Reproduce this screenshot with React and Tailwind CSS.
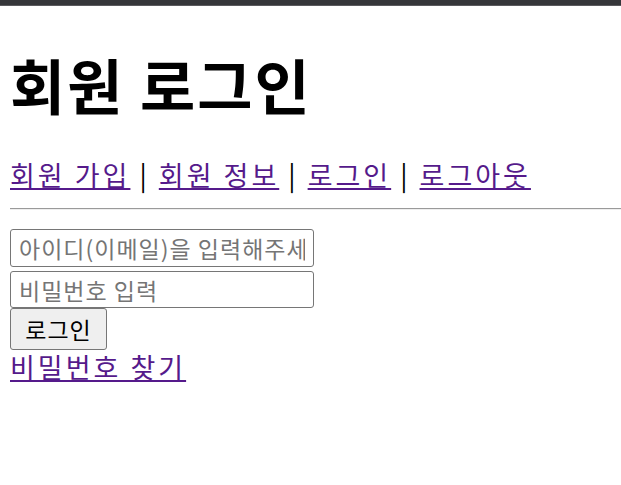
import React from 'react';

const FONT = { fontFamily: '"Noto Sans CJK KR", "Noto Sans", sans-serif' };

export default function App() {
  const links = ['회원 가입', '회원 정보', '로그인', '로그아웃'];

  return (
    <div className="min-h-[485px] bg-white text-black" style={FONT}>
      {/* top strip */}
      <div className="h-[6px] bg-[#35363a] border-b border-[#5a5a5e]" />

      <div className="pl-[10px]">
        <h1 className="text-[60px] font-bold leading-[60px] tracking-[2px] pt-[48px] pb-[44px]">회원 로그인</h1>

        {/* nav */}
        <nav className="text-[27px] leading-[34px] tracking-[3px]">
          {links.map((l, i) => (
            <span key={l}>
              <a href="#" className="text-[#551a8b] underline">{l}</a>
              {i < links.length - 1 && <span> | </span>}
            </span>
          ))}
        </nav>

        <hr className="mt-[16px] mb-[19px] border-t border-t-[#9a9a9a] border-b border-b-[#eeeeee]" />

        {/* form */}
        <div className="flex flex-col items-start">
          <input
            type="text"
            placeholder="아이디(이메일)을 입력해주세요"
            className="w-[304px] h-[38px] px-[8px] text-[23px] tracking-[1px] border border-[#767676] rounded-[3px] placeholder:text-[#757575] mb-[4px]"
          />
          <input
            type="password"
            placeholder="비밀번호 입력"
            className="w-[304px] h-[37px] px-[8px] text-[23px] tracking-[1px] border border-[#767676] rounded-[3px] placeholder:text-[#757575]"
          />
          <button className="w-[97px] h-[42px] text-[23px] tracking-[1px] bg-[#efefef] border border-[#767676] rounded-[3px]">
            로그인
          </button>
          <a href="#" className="text-[#551a8b] underline text-[27px] leading-[34px] tracking-[3px]">비밀번호 찾기</a>
        </div>
      </div>
    </div>
  );
}
